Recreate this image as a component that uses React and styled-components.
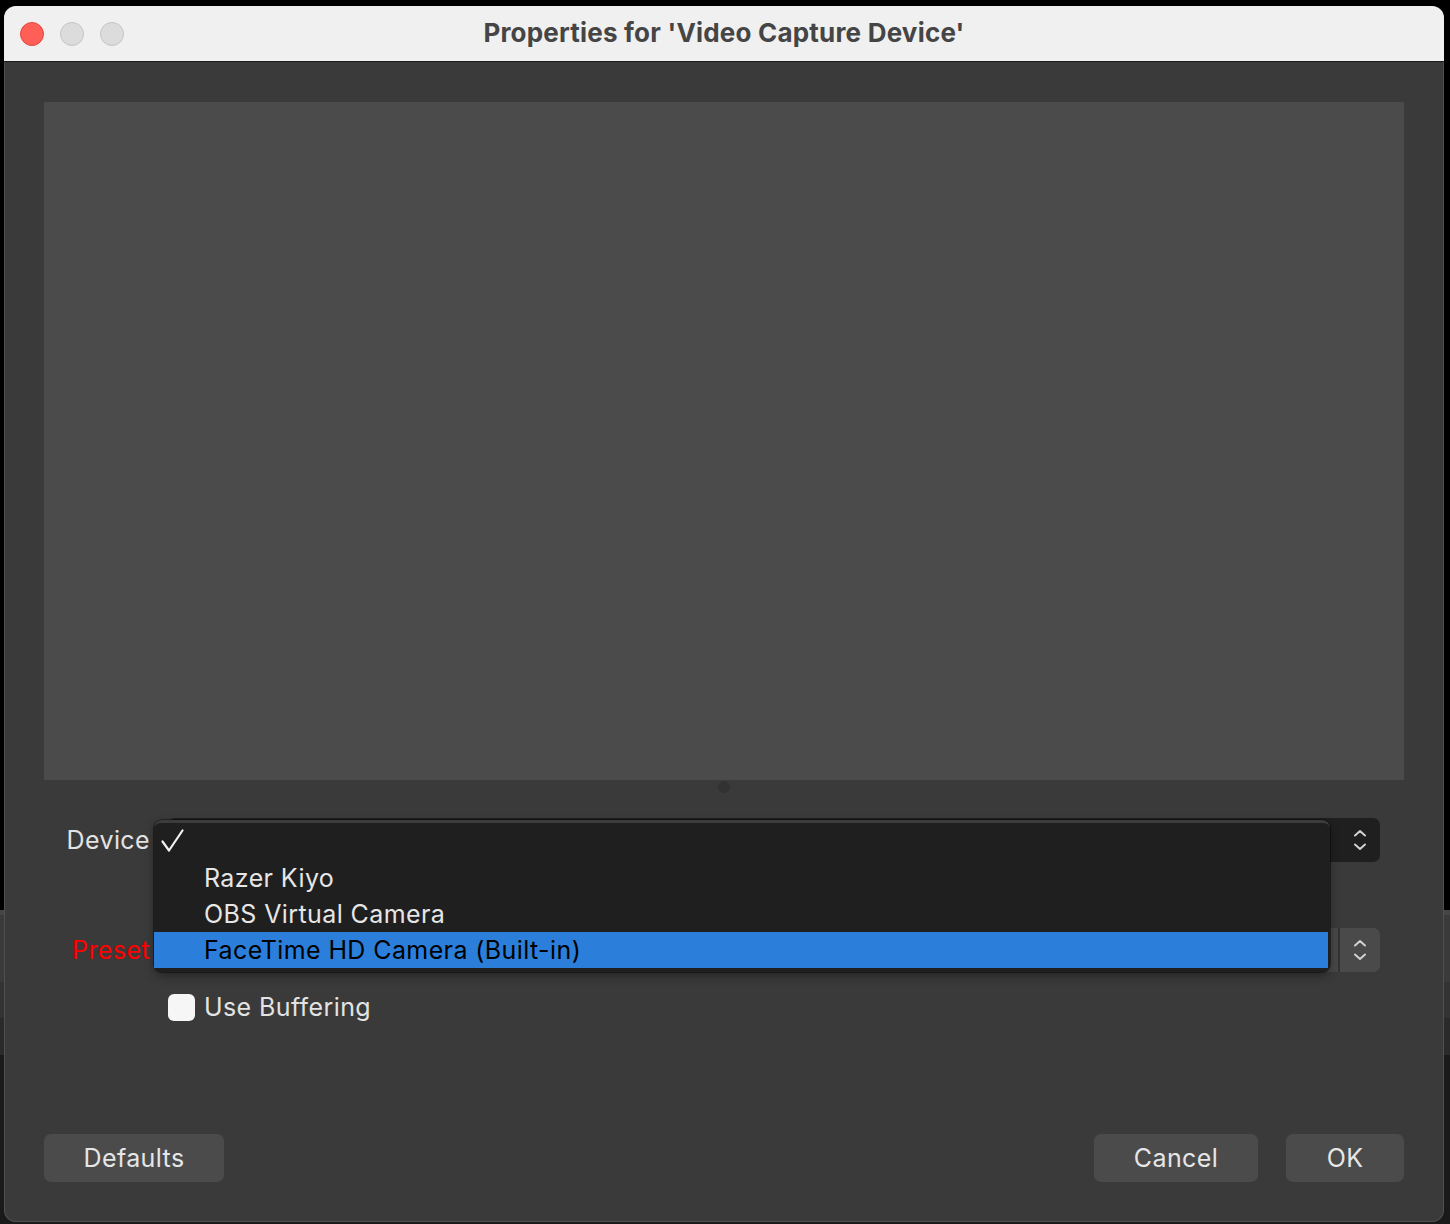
import React from "react";
import styled, { createGlobalStyle } from "styled-components";

const Global = createGlobalStyle`
  html, body { margin: 0; padding: 0; }
  body {
    width: 1450px;
    height: 1224px;
    overflow: hidden;
    background: linear-gradient(
      to bottom,
      #000 0px, #000 910px,
      #454545 910px, #454545 915px,
      #3a3a3a 915px, #3a3a3a 982px,
      #333 982px, #333 1018px,
      #2a2a2a 1018px, #2a2a2a 1055px,
      #1a1a1a 1055px
    );
    font-family: Inter, "Noto Sans", "Liberation Sans", sans-serif;
  }
`;

const Desktop = styled.div`
  padding: 6px 0 0 4px;
`;

const Window = styled.div`
  width: 1440px;
  height: 1216px;
  border-radius: 12px;
  overflow: hidden;
  display: flex;
  flex-direction: column;
  background: #3a3a3a;
  box-shadow: inset 0 0 0 1px #505050;
`;

const TitleBar = styled.div`
  height: 55px;
  flex: none;
  background: #f0f0f0;
  border-bottom: 1px solid #1c1c1c;
  display: grid;
  grid-template-columns: 1fr auto 1fr;
  align-items: center;
  padding: 0 16px;
`;

const Lights = styled.div`
  display: flex;
  gap: 16px;
`;

const Light = styled.span`
  width: 24px;
  height: 24px;
  border-radius: 50%;
  box-sizing: border-box;
  background: ${(p) => (p.$red ? "#ff5f57" : "#dcdcdc")};
  border: 1px solid ${(p) => (p.$red ? "#e1463e" : "#c4c4c4")};
`;

const Title = styled.div`
  font-size: 26px;
  font-weight: 700;
  color: #454545;
  letter-spacing: 0.2px;
  margin-top: -2px;
`;

const Body = styled.div`
  flex: 1;
  display: flex;
  flex-direction: column;
  padding: 40px 40px 40px 40px;
`;

const Preview = styled.div`
  height: 678px;
  background: #4b4b4b;
  flex: none;
`;

const Splitter = styled.div`
  height: 14px;
  display: flex;
  justify-content: center;
  align-items: center;
  margin-bottom: 24px;
`;

const Dot = styled.span`
  width: 12px;
  height: 12px;
  border-radius: 50%;
  background: #323232;
`;

const Form = styled.div`
  position: relative;
  display: flex;
  flex-direction: column;
`;

const Row = styled.div`
  display: grid;
  grid-template-columns: 106px 1212px;
  column-gap: 18px;
  align-items: center;
  height: 44px;
  margin-top: ${(p) => p.$mt || 0}px;
`;

const Label = styled.span`
  text-align: right;
  font-size: 25px;
  letter-spacing: 0.4px;
  color: ${(p) => (p.$error ? "#ff0000" : "#e3e3e3")};
`;

const Combo = styled.div`
  height: 44px;
  border-radius: 7px;
  background: ${(p) => (p.$light ? "#474747" : "#1f1f1f")};
  display: flex;
  justify-content: flex-end;
  align-items: stretch;
`;

const Stepper = styled.div`
  width: 40px;
  display: flex;
  align-items: center;
  justify-content: center;
  border-left: ${(p) => (p.$sep ? "2px solid #333" : "none")};
  background: ${(p) => (p.$sep ? "#4a4a4a" : "transparent")};
  border-radius: 0 7px 7px 0;
`;

const CheckRow = styled.label`
  display: flex;
  align-items: center;
  gap: 9px;
  margin: 20px 0 0 124px;
  font-size: 25px;
  letter-spacing: 0.4px;
  color: #e3e3e3;
`;

const Box = styled.span`
  width: 27px;
  height: 27px;
  border-radius: 6px;
  background: #f6f6f6;
`;

const Popup = styled.div`
  position: absolute;
  top: 2px;
  left: 110px;
  width: 1176px;
  padding: 1px 0 4px;
  background: #1f1f1f;
  border-radius: 8px;
  border-top: 3px solid #3c3c3c;
  box-sizing: border-box;
  box-shadow: 0 4px 10px rgba(0, 0, 0, 0.35), 0 0 0 1px rgba(0, 0, 0, 0.4);
  z-index: 2;
`;

const Item = styled.div`
  height: 36px;
  display: flex;
  align-items: center;
  padding-left: 50px;
  margin-right: 2px;
  position: relative;
  font-size: 25px;
  letter-spacing: 0.4px;
  color: ${(p) => (p.$active ? "#000" : "#e6e6e6")};
  background: ${(p) => (p.$active ? "#2b7fdb" : "transparent")};
`;

const Check = styled.svg`
  position: absolute;
  left: 6px;
  top: 4px;
`;

const Buttons = styled.div`
  margin-top: auto;
  display: flex;
  align-items: center;
  gap: 28px;
`;

const Button = styled.button`
  height: 48px;
  width: ${(p) => p.$w}px;
  border: none;
  border-radius: 7px;
  background: #4b4b4b;
  color: #e6e6e6;
  font-family: inherit;
  font-size: 25px;
  letter-spacing: 0.4px;
  margin-left: ${(p) => (p.$push ? "auto" : "0")};
  padding: 0;
`;

const Arrows = () => (
  <svg width="14" height="24" viewBox="0 0 14 24" fill="none">
    <path d="M2 7.5 L7 3 L12 7.5" stroke="#d0d0d0" strokeWidth="2" strokeLinecap="round" strokeLinejoin="round" />
    <path d="M2 16.5 L7 21 L12 16.5" stroke="#d0d0d0" strokeWidth="2" strokeLinecap="round" strokeLinejoin="round" />
  </svg>
);

export default function App() {
  return (
    <>
      <Global />
      <Desktop>
        <Window>
          <TitleBar>
            <Lights>
              <Light $red />
              <Light />
              <Light />
            </Lights>
            <Title>Properties for 'Video Capture Device'</Title>
            <span />
          </TitleBar>
          <Body>
            <Preview />
            <Splitter>
              <Dot />
            </Splitter>
            <Form>
              <Row>
                <Label>Device</Label>
                <Combo>
                  <Stepper>
                    <Arrows />
                  </Stepper>
                </Combo>
              </Row>
              <Row $mt={66}>
                <Label $error>Preset</Label>
                <Combo $light>
                  <Stepper $sep>
                    <Arrows />
                  </Stepper>
                </Combo>
              </Row>
              <CheckRow>
                <Box />
                Use Buffering
              </CheckRow>
              <Popup>
                <Item>
                  <Check width="26" height="26" viewBox="0 0 26 26" fill="none">
                    <path d="M2.5 13.5 L9 22.5 L22.5 2.5" stroke="#f2f2f2" strokeWidth="2.2" strokeLinecap="round" strokeLinejoin="round" />
                  </Check>
                </Item>
                <Item>Razer Kiyo</Item>
                <Item>OBS Virtual Camera</Item>
                <Item $active>FaceTime HD Camera (Built-in)</Item>
              </Popup>
            </Form>
            <Buttons>
              <Button $w={180}>Defaults</Button>
              <Button $w={164} $push>Cancel</Button>
              <Button $w={118}>OK</Button>
            </Buttons>
          </Body>
        </Window>
      </Desktop>
    </>
  );
}
